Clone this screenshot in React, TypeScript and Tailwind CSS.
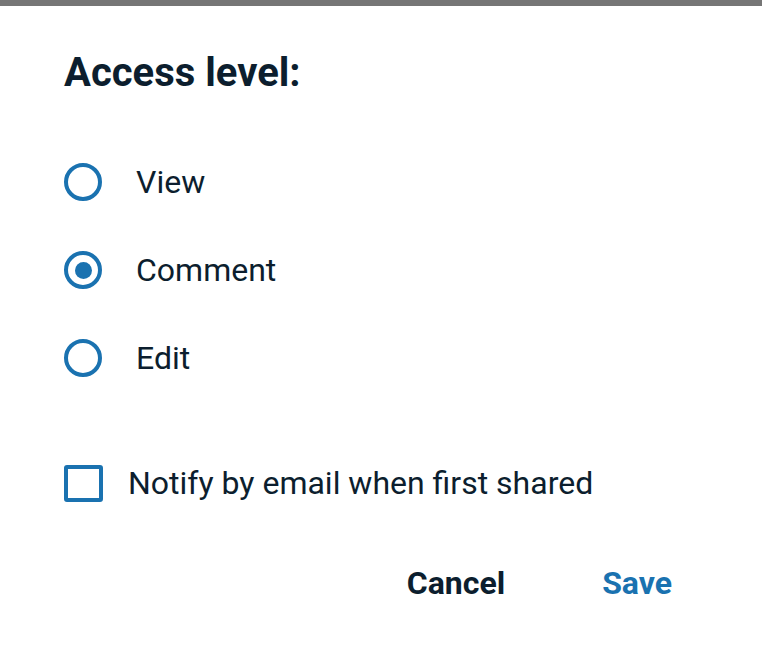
import { useState } from "react";

const options = ["View", "Comment", "Edit"];

export default function App() {
  const [level, setLevel] = useState("Comment");
  const [notify, setNotify] = useState(false);

  return (
    <div className="w-[762px] h-[645px] bg-white font-['Roboto',sans-serif] text-[#0c1e2e] overflow-hidden">
      <div className="h-[6px] bg-[#767676]" />
      <div className="pl-[64px] pr-[90px]">
        <h2 className="mt-[43px] text-[40px] leading-[48px] font-bold">Access level:</h2>

        <div className="mt-[66px] flex flex-col gap-[50px]">
          {options.map((opt) => (
            <label key={opt} className="flex items-center gap-[34px] cursor-pointer" onClick={() => setLevel(opt)}>
              <span className="w-[38px] h-[38px] rounded-full border-4 border-[#1a72b0] flex items-center justify-center">
                {level === opt && <span className="w-[17px] h-[17px] rounded-full bg-[#1a72b0]" />}
              </span>
              <span className="text-[32px] leading-[38px]">{opt}</span>
            </label>
          ))}
        </div>

        <label className="mt-[87px] flex items-center gap-[25px] cursor-pointer" onClick={() => setNotify(!notify)}>
          <span className="w-[39px] h-[37px] rounded-[3px] border-4 border-[#1a72b0] flex items-center justify-center">
            {notify && <span className="w-[20px] h-[20px] bg-[#1a72b0]" />}
          </span>
          <span className="text-[32px] leading-[38px]">Notify by email when first shared</span>
        </label>

        <div className="mt-[62px] flex justify-end gap-[97px]">
          <button className="text-[32px] leading-[38px] font-bold text-[#0c1e2e]">Cancel</button>
          <button className="text-[32px] leading-[38px] font-bold text-[#1a72b0]">Save</button>
        </div>
      </div>
    </div>
  );
}
